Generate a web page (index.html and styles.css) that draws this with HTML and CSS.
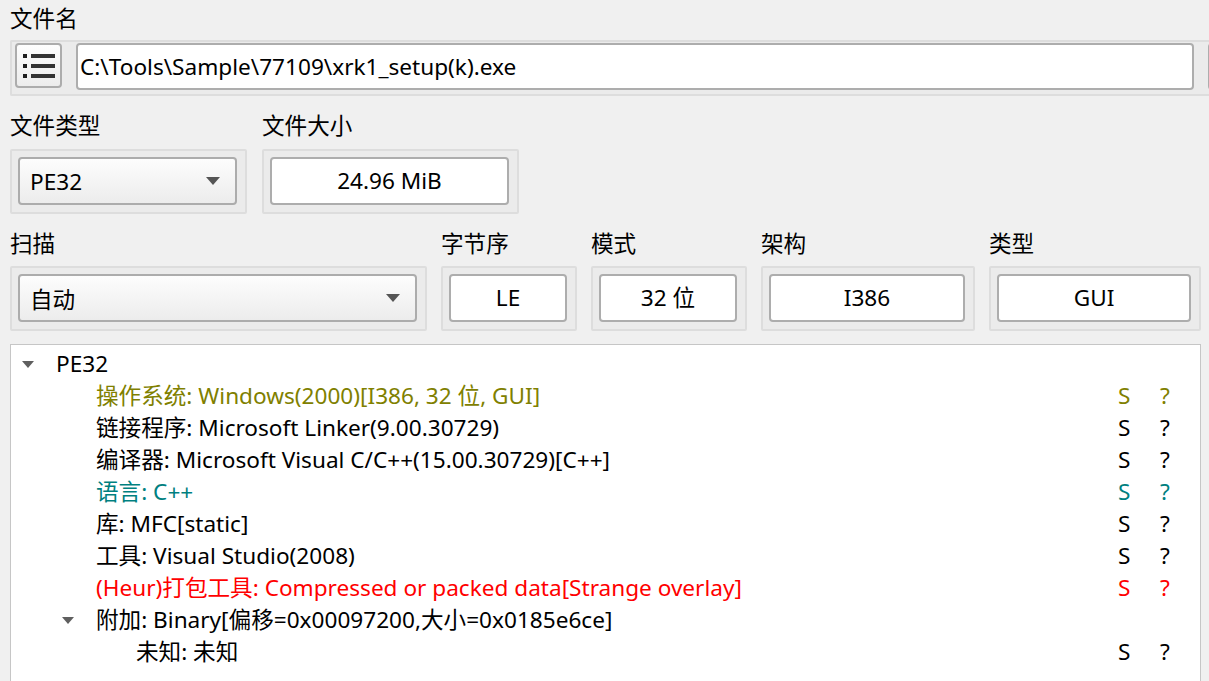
FILE: index.html
```html
<!DOCTYPE html>
<html lang="zh">
<head>
<meta charset="utf-8">
<title>文件信息</title>
<link rel="stylesheet" href="styles.css">
</head>
<body>
<div class="page">
  <div class="field">
    <div class="label label-top">文件名</div>
    <div class="frame frame-file">
      <button class="btn-icon" type="button" aria-label="列表">
        <svg width="32" height="24" viewBox="0 0 32 24">
          <rect x="0" y="0" width="4" height="4" fill="#1e1e1e"/>
          <rect x="8" y="0" width="24" height="4" fill="#333"/>
          <rect x="0" y="10" width="4" height="4" fill="#1e1e1e"/>
          <rect x="8" y="10" width="24" height="4" fill="#333"/>
          <rect x="0" y="20" width="4" height="4" fill="#1e1e1e"/>
          <rect x="8" y="20" width="24" height="4" fill="#333"/>
        </svg>
      </button>
      <div class="input input-path">C:\Tools\Sample\77109\xrk1_setup(k).exe</div>
      <div class="input input-extra"></div>
    </div>
  </div>

  <div class="row">
    <div class="field">
      <div class="label">文件类型</div>
      <div class="frame w-type">
        <div class="combo"><span>PE32</span><span class="caret"></span></div>
      </div>
    </div>
    <div class="field">
      <div class="label">文件大小</div>
      <div class="frame w-size">
        <div class="input center">24.96 MiB</div>
      </div>
    </div>
  </div>

  <div class="row row3">
    <div class="field">
      <div class="label">扫描</div>
      <div class="frame w-scan">
        <div class="combo"><span>自动</span><span class="caret"></span></div>
      </div>
    </div>
    <div class="field">
      <div class="label">字节序</div>
      <div class="frame w-endian">
        <div class="input center">LE</div>
      </div>
    </div>
    <div class="field">
      <div class="label">模式</div>
      <div class="frame w-mode">
        <div class="input center">32 位</div>
      </div>
    </div>
    <div class="field">
      <div class="label">架构</div>
      <div class="frame w-arch">
        <div class="input center">I386</div>
      </div>
    </div>
    <div class="field">
      <div class="label">类型</div>
      <div class="frame w-kind">
        <div class="input center">GUI</div>
      </div>
    </div>
  </div>

  <div class="tree">
    <div class="trow">
      <div class="name l0"><span class="twisty"><span class="tri"></span></span>PE32</div>
      <div></div><div></div>
    </div>
    <div class="trow olive">
      <div class="name l1"><span class="twisty"></span>操作系统: Windows(2000)[I386, 32 位, GUI]</div>
      <div>S</div><div>?</div>
    </div>
    <div class="trow">
      <div class="name l1"><span class="twisty"></span>链接程序: Microsoft Linker(9.00.30729)</div>
      <div>S</div><div>?</div>
    </div>
    <div class="trow">
      <div class="name l1"><span class="twisty"></span>编译器: Microsoft Visual C/C++(15.00.30729)[C++]</div>
      <div>S</div><div>?</div>
    </div>
    <div class="trow teal">
      <div class="name l1"><span class="twisty"></span>语言: C++</div>
      <div>S</div><div>?</div>
    </div>
    <div class="trow">
      <div class="name l1"><span class="twisty"></span>库: MFC[static]</div>
      <div>S</div><div>?</div>
    </div>
    <div class="trow">
      <div class="name l1"><span class="twisty"></span>工具: Visual Studio(2008)</div>
      <div>S</div><div>?</div>
    </div>
    <div class="trow red">
      <div class="name l1"><span class="twisty"></span>(Heur)打包工具: Compressed or packed data[Strange overlay]</div>
      <div>S</div><div>?</div>
    </div>
    <div class="trow">
      <div class="name l1"><span class="twisty"><span class="tri"></span></span>附加: Binary[偏移=0x00097200,大小=0x0185e6ce]</div>
      <div></div><div></div>
    </div>
    <div class="trow">
      <div class="name l2"><span class="twisty"></span>未知: 未知</div>
      <div>S</div><div>?</div>
    </div>
  </div>
</div>
</body>
</html>
```

FILE: styles.css
```css
* { box-sizing: border-box; }
html, body { margin: 0; padding: 0; }
body {
  width: 1209px;
  height: 681px;
  overflow: hidden;
  background: #f0f0f0;
  color: #000;
  font-family: "Noto Sans", "Noto Sans CJK SC", sans-serif;
  font-size: 22.6px;
}
.page {
  padding-left: 10px;
  display: flex;
  flex-direction: column;
}
.row { display: flex; gap: 15px; }
.row3 { gap: 14px; }
.field { display: flex; flex-direction: column; }
.label {
  height: 53px;
  padding-top: 10px;
  line-height: 40px;
  white-space: nowrap;
}
.label-top { height: 40px; padding-top: 0; line-height: 38px; }
.row3 .label { height: 52px; }

.frame {
  border: 2px solid #dddddd;
  border-radius: 2px;
  background: #ebebeb;
  padding: 6px 8px 7px 6px;
}
.frame-file {
  width: 1199px;
  height: 56px;
  padding: 1px 0 4px 3px;
  border-right: 0;
  border-radius: 2px 0 0 2px;
  display: flex;
  align-items: flex-start;
  gap: 14px;
  overflow: hidden;
}
.btn-icon {
  width: 47px;
  height: 45px;
  flex: none;
  border: 2px solid #acacac;
  border-radius: 4px;
  background: linear-gradient(#fdfdfd, #ececec);
  display: flex;
  align-items: center;
  justify-content: center;
  padding: 0;
}
.input {
  height: 48px;
  border: 2px solid #adadad;
  border-radius: 4px;
  background: #fff;
  line-height: 44px;
  white-space: nowrap;
}
.input.center { text-align: center; }
.input-path { width: 1118px; height: 47px; flex: none; padding-left: 2px; line-height: 43px; }
.input-extra { width: 60px; height: 47px; flex: none; background: linear-gradient(#fdfdfd, #ececec); }

.combo {
  height: 48px;
  border: 2px solid #acacac;
  border-radius: 4px;
  background: linear-gradient(#fdfdfd, #ececec);
  display: flex;
  align-items: center;
  justify-content: space-between;
  padding: 0 15px 0 10px;
}
.caret {
  width: 0;
  height: 0;
  border-left: 7px solid transparent;
  border-right: 7px solid transparent;
  border-top: 8px solid #555;
}

.w-type { width: 237px; }
.w-size { width: 257px; }
.w-scan { width: 417px; }
.w-endian { width: 136px; }
.w-mode { width: 156px; }
.w-arch { width: 214px; }
.w-kind { width: 212px; }

.tree {
  margin-top: 13px;
  width: 1191px;
  height: 340px;
  border: 1px solid #c6c6c6;
  background: #fff;
  padding-top: 3px;
}
.trow {
  display: grid;
  grid-template-columns: 1107px 42px 1fr;
  height: 32px;
  line-height: 32px;
  white-space: nowrap;
}
.name { display: flex; align-items: center; }
.twisty {
  width: 45px;
  flex: none;
  height: 32px;
  display: flex;
  align-items: center;
  padding-left: 11px;
}
.tri {
  width: 0;
  height: 0;
  border-left: 6.5px solid transparent;
  border-right: 6.5px solid transparent;
  border-top: 7px solid #5f5f5f;
}
.l0 { padding-left: 0; }
.l1 { padding-left: 40px; }
.l2 { padding-left: 80px; }
.olive { color: #808000; }
.teal { color: #008080; }
.red { color: #ff0000; }
```
